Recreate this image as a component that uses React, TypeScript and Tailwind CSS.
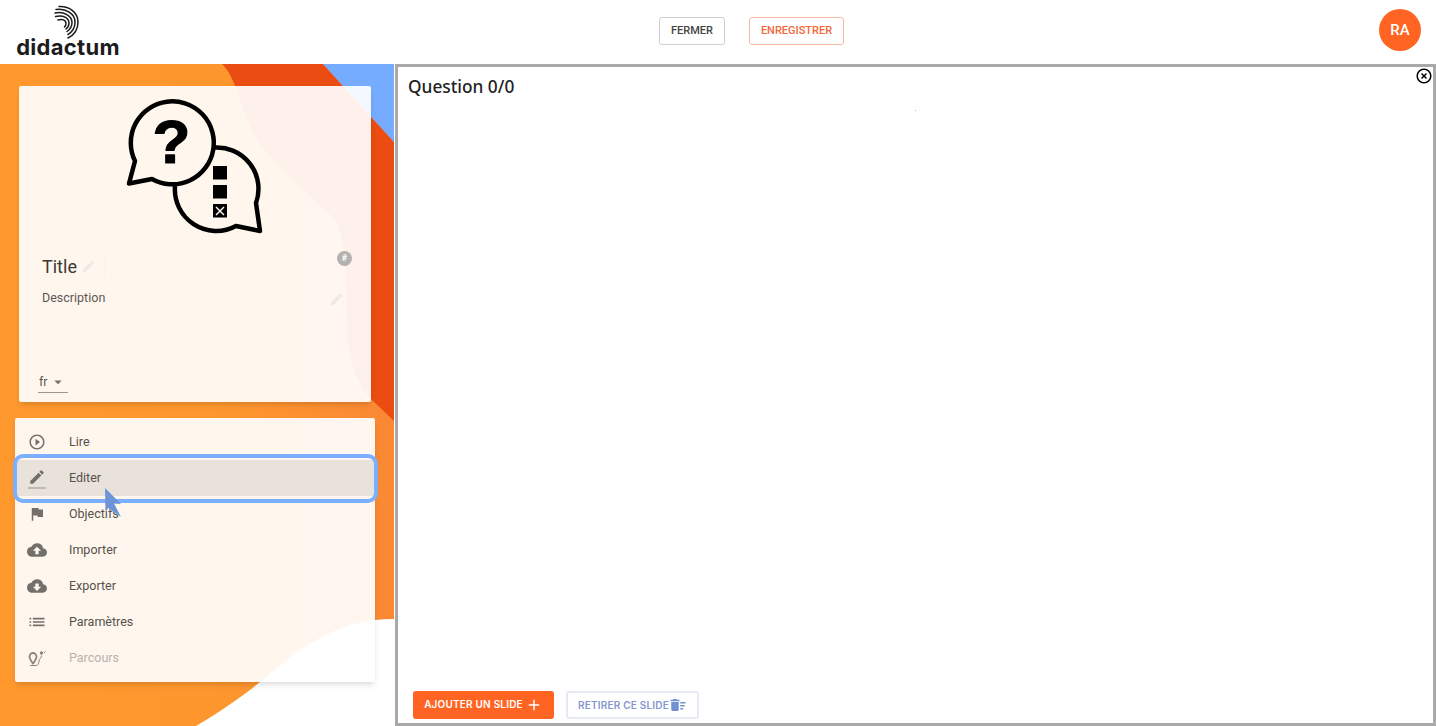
import {MdAdd, MdArrowDropDown, MdCloudDownload, MdCloudUpload, MdCreate, MdDeleteSweep, MdEdit, MdFlag, MdHighlightOff, MdList, MdPlayCircleOutline} from "react-icons/md";
import type {ReactNode} from "react";

function Logo() {
    return (
        <div className="flex flex-col items-center w-[102px] ml-[17px] pt-[5px]">
            <svg width="26" height="34" viewBox="0 0 26 34" fill="none" stroke="#1c1c1c" strokeLinecap="round" className="-ml-[2px]">
                <path d="M5 1.500C15 1 24 7 24 17c0 8-4 13-10 16" strokeWidth="1.500"/>
                <path d="M2 4.500C12 3 21 9 21 17c0 6-3 10-7 12.500" strokeWidth="1.500"/>
                <path d="M1 8C10 6 18 11 18 17.500c0 4-2 7-5 9" strokeWidth="1.500"/>
                <path d="M1.500 11.500C9 9.500 15 13 15 18c0 2.500-1 4.500-3 6" strokeWidth="1.500"/>
                <path d="M4 15c4-1.500 8 0 8 3.500 0 1.500-.5 2.500-1.500 3.500" strokeWidth="1.500"/>
            </svg>
            <div className="font-['Inter',sans-serif] font-bold text-[22px] leading-[17px] tracking-[0.3px] text-[#1c1c1c]">didactum</div>
        </div>
    )
}

function Header() {
    return (
        <header className="h-16 flex items-start bg-white">
            <div className="w-[659px]">
                <Logo/>
            </div>
            <div className="flex gap-6 mt-[17px] font-['Roboto',sans-serif] font-medium text-[11px]">
                <button className="w-[66px] h-7 border border-[#cfcfcf] rounded-[3px] text-[#444]">FERMER</button>
                <button className="w-[95px] h-7 border border-[#f6b9a3] rounded-[3px] text-[#f4673a]">ENREGISTRER</button>
            </div>
            <div className="ml-auto mr-[15px] mt-[9px] size-[42px] rounded-full bg-[#ff6422] flex items-center justify-center font-['Roboto',sans-serif] font-medium text-[15px] text-white">RA</div>
        </header>
    )
}

function SidebarBackground() {
    return (
        <svg className="absolute inset-0" width="394" height="662" viewBox="0 0 394 662">
            <defs>
                <linearGradient id="bgOrange" x1="0" x2="1" y1="0" y2="0">
                    <stop offset="0" stopColor="#ff992e"/>
                    <stop offset="0.6" stopColor="#fe962e"/>
                    <stop offset="1" stopColor="#fa8834"/>
                </linearGradient>
            </defs>
            <rect width="394" height="662" fill="url(#bgOrange)"/>
            <path d="M222 0C235 12 240 40 253 69C265 90 285 110 333 153C350 175 345 230 348 276C350 300 360 325 372 336L394 357V78L323 0Z" fill="#eb4c11"/>
            <path d="M323 0H394V78Z" fill="#76acff"/>
            <path d="M196 662C225 645 245 630 260 618C300 585 335 555 394 555V662Z" fill="#ffffff"/>
        </svg>
    )
}

// coordonnees du viewBox = coordonnees de la page
function QuizIcon() {
    return (
        <svg width="140" height="142" viewBox="125 95 140 142" fill="none" stroke="#000" strokeWidth="4.500" strokeLinejoin="round">
            <path d="M152 179A41.500 41.500 0 1 0 135 161L129 183.500Z"/>
            <path d="M214 147.500A41.500 41.500 0 0 1 256 203L260 231L236 226A41.500 41.500 0 0 1 175 186"/>
            <text x="171.500" y="162.500" textAnchor="middle" fontFamily="'Liberation Sans', sans-serif" fontWeight="700" fontSize="62" fill="#000" stroke="#000" strokeWidth="1.200">?</text>
            <rect x="213" y="166" width="14" height="13.500" fill="#000" stroke="none"/>
            <rect x="213" y="185" width="14" height="13.500" fill="#000" stroke="none"/>
            <rect x="213" y="204" width="14" height="13.500" fill="#000" stroke="none"/>
            <path d="M216 207L224 215M224 207L216 215" stroke="#fff6ee" strokeWidth="1.500"/>
        </svg>
    )
}

function InfoCard() {
    return (
        <div className="relative w-[352px] h-[316px] ml-[19px] bg-white/[.92] rounded-[2px] shadow-md font-['Roboto',sans-serif]">
            <div className="flex justify-center pt-[9px] pr-[1px]">
                <QuizIcon/>
            </div>
            <div className="flex items-center justify-between pl-[18px] pr-[19px] mt-[14px]">
                <div className="flex items-center h-[30px] pl-1 pr-2 rounded border border-black/[.01]">
                    <span className="text-[18px] text-[#3d3733]">Title</span>
                    <MdCreate className="ml-[4px] text-[#ece8e3]" size={15}/>
                </div>
                <div className="mb-4 size-[15px] rounded-full bg-[#b4b1ae] flex items-center justify-center text-[9px] font-bold text-white">#</div>
            </div>
            <div className="ml-[19px] mr-[20px] mt-[3px] h-[66px] px-[3px] pt-[3px] flex justify-between border border-black/[.01] rounded">
                <span className="text-[12.5px] text-[#5d5854]">Description</span>
                <MdCreate className="mr-[3px] mt-[3px] text-[#ece8e3]" size={15}/>
            </div>
            <div className="absolute left-[19px] top-[287px] w-[30px] h-[20px] pl-px flex items-start border-b border-[#9b9690] text-[12.5px] text-[#5d5854]">
                <span>fr</span>
                <MdArrowDropDown className="ml-[1px] text-[#77716c]" size={18}/>
            </div>
        </div>
    )
}

function MenuRow({icon, label, active, muted}: {icon: ReactNode, label: string, active?: boolean, muted?: boolean}) {
    return (
        <div className={`relative h-9 flex items-center ${active ? "bg-[#e9e2db]" : ""}`}>
            <div className={`w-[44px] mr-[10px] flex justify-center ${muted ? "text-[#8a8580]" : "text-[#73706c]"}`}>{icon}</div>
            <span className={`pt-px text-[12.5px] ${muted ? "text-[#b7b2ad]" : "text-[#55514d]"}`}>{label}</span>
            {active && <div className="absolute -left-[2px] -right-[3px] -top-[6px] -bottom-[7px] border-4 border-[#7ab0ff] rounded-[10px]"></div>}
        </div>
    )
}

function EditIcon() {
    return (
        <div className="flex flex-col items-center">
            <MdEdit size={18}/>
            <div className="w-[18px] h-[2px] mt-[1px] bg-[#bdb9b4]"></div>
        </div>
    )
}

function ParcoursIcon() {
    return (
        <svg width="19" height="19" viewBox="0 0 19 19" fill="none" stroke="currentColor">
            <path d="M5 4a3.500 3.500 0 0 1 3.500 3.500C8.500 10 5 14.500 5 14.500S1.500 10 1.500 7.500A3.500 3.500 0 0 1 5 4Z" strokeWidth="1.800"/>
            <circle cx="13.500" cy="4" r="1.700" fill="currentColor" stroke="none"/>
            <path d="M13.500 6.500c0 3-2.500 3-2.500 5.500s-1 4.500-3 4.500H2" strokeWidth="1"/>
            <path d="M16 4l1.500-1.500" strokeWidth="1"/>
        </svg>
    )
}

function Menu() {
    return (
        <div className="relative w-[360px] ml-[15px] mt-4 py-[6px] bg-white/[.92] rounded-[2px] shadow-md font-['Roboto',sans-serif]">
            <MenuRow icon={<MdPlayCircleOutline size={18}/>} label="Lire"/>
            <MenuRow active icon={<EditIcon/>} label="Editer"/>
            <MenuRow icon={<MdFlag size={18}/>} label="Objectifs"/>
            <MenuRow icon={<MdCloudUpload size={20}/>} label="Importer"/>
            <MenuRow icon={<MdCloudDownload size={20}/>} label="Exporter"/>
            <MenuRow icon={<MdList size={20}/>} label="Paramètres"/>
            <MenuRow muted icon={<ParcoursIcon/>} label="Parcours"/>
            {/* curseur de la capture */}
            <svg className="absolute left-[89px] top-[70px]" width="18" height="30" viewBox="0 0 18 30">
                <path d="M1 0L17 16L10 15.500L17 29L4 20L1.500 23Z" fill="#6d94d6"/>
            </svg>
        </div>
    )
}

function Main() {
    return (
        <main className="relative ml-px flex-1 flex flex-col border-[3px] border-[#a9a9a9] bg-white">
            <MdHighlightOff className="absolute top-[0px] right-[0px] text-black" size={18}/>
            <h1 className="pl-[10px] pt-[7px] font-['Noto_Sans',sans-serif] font-medium text-[17.300px] leading-[26px] text-[#222]">Question 0/0</h1>
            <div className="mx-auto mt-[10px] size-px bg-[#b9b9b9]"></div>
            <div className="mt-auto flex gap-3 pl-[15px] pb-[4px] font-['Inter',sans-serif] font-semibold text-[10px] tracking-[0.2px]">
                <button className="w-[141px] h-7 pb-px flex items-center justify-center gap-[2px] rounded-[3px] bg-[#ff6422] text-white">
                    AJOUTER UN SLIDE <MdAdd size={18}/>
                </button>
                <button className="w-[133px] h-7 flex items-center justify-center border-2 border-[#e6eaf5] rounded-[3px] text-[#8497cf]">
                    RETIRER CE SLIDE<MdDeleteSweep className="text-[#7291d3]" size={18}/>
                </button>
            </div>
        </main>
    )
}

export default function App() {
    return (
        <div className="h-[726px] flex flex-col overflow-hidden bg-white">
            <Header/>
            <div className="flex-1 flex min-h-0">
                <aside className="relative w-[394px] shrink-0">
                    <SidebarBackground/>
                    <div className="relative pt-[22px]">
                        <InfoCard/>
                        <Menu/>
                    </div>
                </aside>
                <Main/>
            </div>
        </div>
    )
}
